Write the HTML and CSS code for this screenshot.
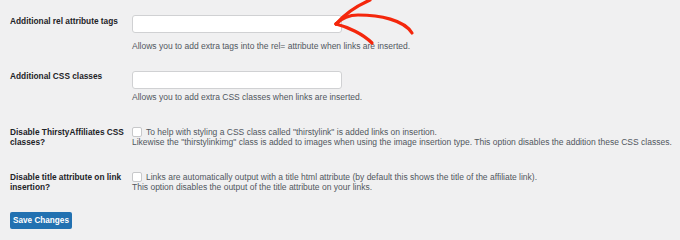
FILE: index.html
```html
<!DOCTYPE html>
<html>
<head>
<meta charset="utf-8">
<link rel="stylesheet" href="styles.css">
</head>
<body>
<div class="page">
  <div class="row row-first">
    <div class="label">Additional rel attribute tags</div>
    <div class="field">
      <div class="input"></div>
      <p class="desc desc-wide">Allows you to add extra tags into the rel= attribute when links are inserted.</p>
    </div>
  </div>
  <div class="row row-text">
    <div class="label">Additional CSS classes</div>
    <div class="field">
      <div class="input"></div>
      <p class="desc desc-tight">Allows you to add extra CSS classes when links are inserted.</p>
    </div>
  </div>
  <div class="row row-check">
    <div class="label">Disable ThirstyAffiliates CSS classes?</div>
    <div class="field">
      <p class="check-text"><span class="checkbox"></span>To help with styling a CSS class called "thirstylink" is added links on insertion.<br>Likewise the "thirstylinkimg" class is added to images when using the image insertion type. This option disables the addition these CSS classes.</p>
    </div>
  </div>
  <div class="row row-check">
    <div class="label">Disable title attribute on link insertion?</div>
    <div class="field">
      <p class="check-text"><span class="checkbox"></span>Links are automatically output with a title html attribute (by default this shows the title of the affiliate link).<br>This option disables the output of the title attribute on your links.</p>
    </div>
  </div>
  <div class="actions">
    <span class="button">Save Changes</span>
  </div>
  <svg class="arrow" width="90" height="48" viewBox="0 0 90 48" fill="none" stroke="#f4270c" stroke-width="3.2" stroke-linecap="round" stroke-linejoin="round">
    <path d="M6,24 C12,18 18,15 28,15 C50,15 74,20 82,33"/>
    <path d="M6,24 C12,17 22,8 40,0"/>
    <path d="M6,24 C18,27 33,34 42,43"/>
  </svg>
</div>
</body>
</html>
```
FILE: styles.css
```css
html, body {
  margin: 0;
  padding: 0;
  background: #f0f0f1;
}
body {
  font-family: "Liberation Sans", Arial, sans-serif;
  font-size: 8.5px;
  line-height: 10.5px;
  color: #50575e;
}
.page {
  position: relative;
  width: 680px;
  height: 236px;
  padding: 15px 0 0 10px;
  box-sizing: border-box;
}
.row {
  display: grid;
  grid-template-columns: 122px 1fr;
  align-items: start;
}
.row-text {
  margin-top: 19px;
}
.row-check {
  margin-top: 24px;
}
.row-first .label {
  padding-top: 0.5px;
}
.row-text .label {
  padding-top: 0.5px;
}
.label {
  font-weight: bold;
  font-size: 8.3px;
  color: #1d2327;
  padding-right: 2px;
}
.input {
  width: 210px;
  height: 18px;
  box-sizing: border-box;
  background: #fff;
  border: 1px solid #d0d1d3;
  border-radius: 3px;
}
.desc {
  margin: 0;
}
.desc-wide {
  margin-top: 8px;
}
.desc-tight {
  margin-top: 3.5px;
}
.check-text {
  margin: 0;
}
.checkbox {
  display: inline-block;
  width: 9.5px;
  height: 9.5px;
  box-sizing: border-box;
  border: 1px solid #c7c8ca;
  border-radius: 2px;
  background: #fff;
  vertical-align: -2px;
  margin-right: 4.5px;
}
.actions {
  margin-top: 19px;
}
.button {
  display: inline-block;
  width: 62px;
  height: 17px;
  box-sizing: border-box;
  background: #2271b1;
  border-radius: 2px;
  color: #fff;
  font-weight: bold;
  font-size: 8.2px;
  line-height: 17px;
  text-align: center;
}
.arrow {
  position: absolute;
  left: 330px;
  top: 0;
}
```
